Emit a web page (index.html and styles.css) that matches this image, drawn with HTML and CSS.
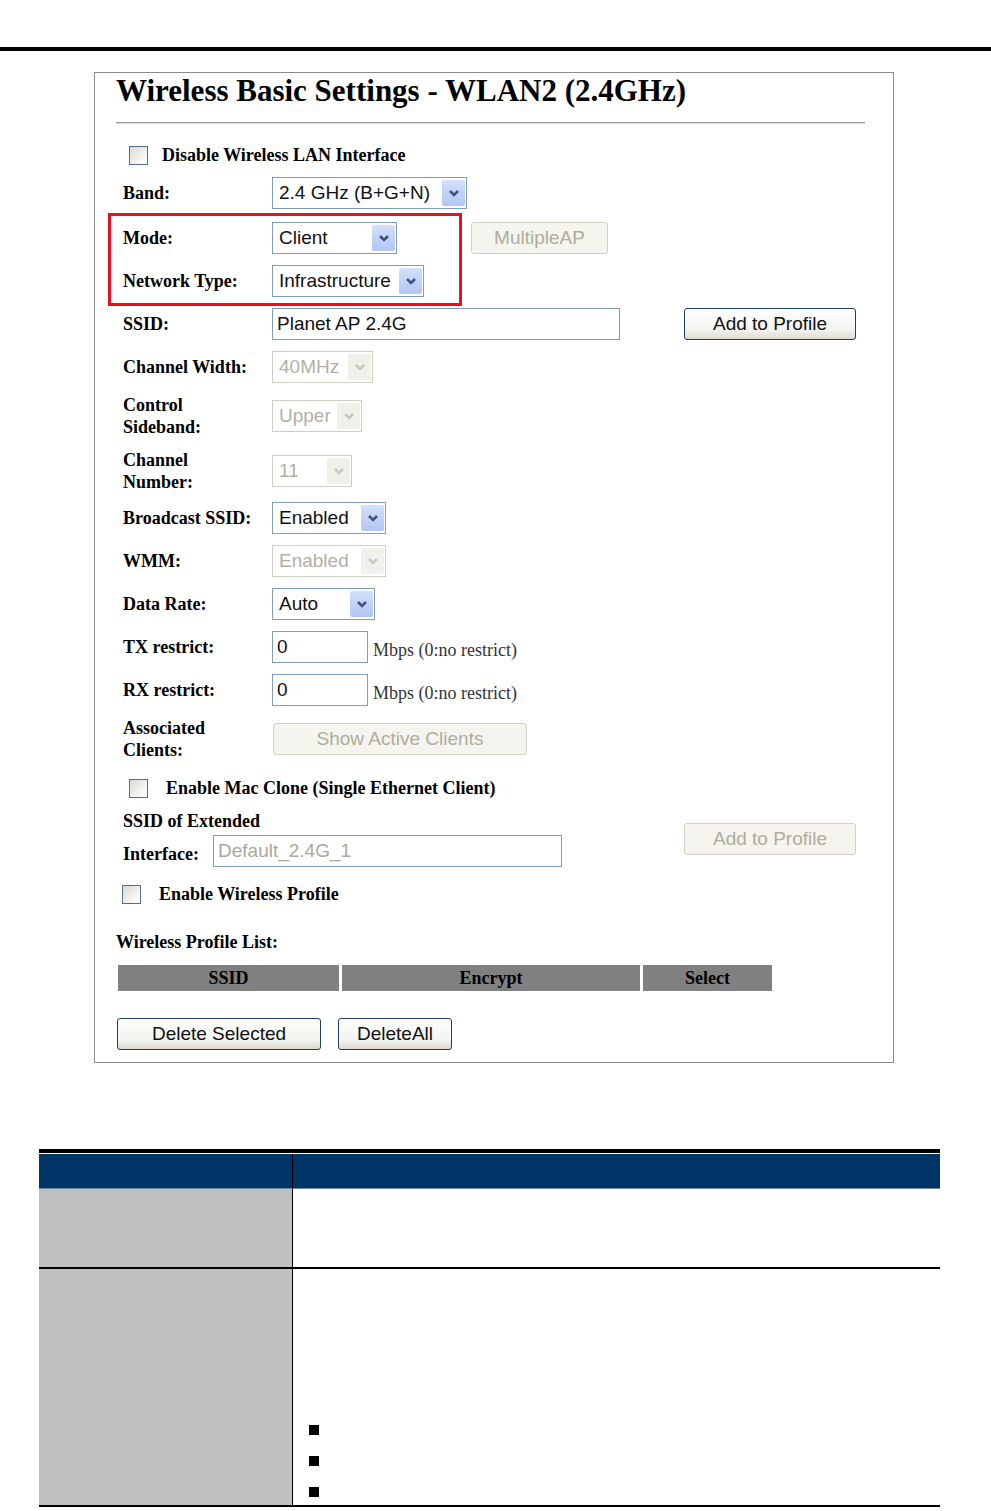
FILE: index.html
```html
<!DOCTYPE html>
<html lang="en">
<head>
  <meta charset="UTF-8">
  <meta name="viewport" content="width=device-width, initial-scale=1.0">
  <title>Wireless Basic Settings - WLAN2 (2.4GHz)</title>
  <link rel="stylesheet" href="styles.css">
</head>
<body>
  <div class="top-rule"></div>

  <div class="panel">
    <h1 class="title">Wireless Basic Settings - WLAN2 (2.4GHz)</h1>
    <hr class="title-rule">

    <div class="form">
      <div class="row check-row first">
        <span class="checkbox"></span>
        <span class="check-label">Disable Wireless LAN Interface</span>
      </div>

      <div class="row">
        <span class="label">Band:</span>
        <div class="select" style="width: 195px">
          <span class="value">2.4 GHz (B+G+N)</span>
          <span class="arrow"><svg viewBox="0 0 12 8"><path d="M2 2 L6 6 L10 2"/></svg></span>
        </div>
      </div>

      <!-- red box marks the two client settings -->
      <div class="highlight">
        <div class="row">
          <span class="label">Mode:</span>
          <div class="select" style="width: 125px">
            <span class="value">Client</span>
            <span class="arrow"><svg viewBox="0 0 12 8"><path d="M2 2 L6 6 L10 2"/></svg></span>
          </div>
          <button class="button disabled multi-ap">MultipleAP</button>
        </div>
        <div class="row">
          <span class="label">Network Type:</span>
          <div class="select" style="width: 152px">
            <span class="value">Infrastructure</span>
            <span class="arrow"><svg viewBox="0 0 12 8"><path d="M2 2 L6 6 L10 2"/></svg></span>
          </div>
        </div>
      </div>

      <div class="row">
        <span class="label">SSID:</span>
        <div class="input ssid">Planet AP 2.4G</div>
        <button class="button add-profile">Add to Profile</button>
      </div>

      <div class="row">
        <span class="label">Channel Width:</span>
        <div class="select disabled" style="width: 101px">
          <span class="value">40MHz</span>
          <span class="arrow"><svg viewBox="0 0 12 8"><path d="M2 2 L6 6 L10 2"/></svg></span>
        </div>
      </div>

      <div class="row">
        <span class="label">Control<br>Sideband:</span>
        <div class="select disabled" style="width: 90px">
          <span class="value">Upper</span>
          <span class="arrow"><svg viewBox="0 0 12 8"><path d="M2 2 L6 6 L10 2"/></svg></span>
        </div>
      </div>

      <div class="row">
        <span class="label">Channel<br>Number:</span>
        <div class="select disabled" style="width: 80px">
          <span class="value">11</span>
          <span class="arrow"><svg viewBox="0 0 12 8"><path d="M2 2 L6 6 L10 2"/></svg></span>
        </div>
      </div>

      <div class="row tight">
        <span class="label">Broadcast SSID:</span>
        <div class="select" style="width: 114px">
          <span class="value">Enabled</span>
          <span class="arrow"><svg viewBox="0 0 12 8"><path d="M2 2 L6 6 L10 2"/></svg></span>
        </div>
      </div>

      <div class="row">
        <span class="label">WMM:</span>
        <div class="select disabled" style="width: 114px">
          <span class="value">Enabled</span>
          <span class="arrow"><svg viewBox="0 0 12 8"><path d="M2 2 L6 6 L10 2"/></svg></span>
        </div>
      </div>

      <div class="row">
        <span class="label">Data Rate:</span>
        <div class="select" style="width: 103px">
          <span class="value">Auto</span>
          <span class="arrow"><svg viewBox="0 0 12 8"><path d="M2 2 L6 6 L10 2"/></svg></span>
        </div>
      </div>

      <div class="row">
        <span class="label">TX restrict:</span>
        <div class="input rate">0</div>
        <span class="unit">Mbps (0:no restrict)</span>
      </div>

      <div class="row">
        <span class="label">RX restrict:</span>
        <div class="input rate">0</div>
        <span class="unit">Mbps (0:no restrict)</span>
      </div>

      <div class="row">
        <span class="label">Associated<br>Clients:</span>
        <button class="button disabled clients">Show Active Clients</button>
      </div>

      <div class="row check-row">
        <span class="checkbox"></span>
        <span class="check-label wide">Enable Mac Clone (Single Ethernet Client)</span>
      </div>

      <div class="row extended">
        <div class="ext-fields">
          <div class="ext-title">SSID of Extended</div>
          <div class="ext-line">
            <span class="ext-label">Interface:</span>
            <div class="input disabled ext-input">Default_2.4G_1</div>
          </div>
        </div>
        <button class="button disabled ext-add">Add to Profile</button>
      </div>

      <div class="row check-row profile">
        <span class="checkbox"></span>
        <span class="check-label wide">Enable Wireless Profile</span>
      </div>
    </div>

    <div class="list-title">Wireless Profile List:</div>
    <table class="profile-table">
      <tr>
        <th class="col-ssid">SSID</th>
        <th class="col-encrypt">Encrypt</th>
        <th class="col-select">Select</th>
      </tr>
    </table>

    <div class="actions">
      <button class="button delete-selected">Delete Selected</button>
      <button class="button delete-all">DeleteAll</button>
    </div>
  </div>

  <div class="desc">
    <div class="desc-head left"></div>
    <div class="desc-head right"></div>
    <div class="desc-name first"></div>
    <div class="desc-text first"></div>
    <div class="desc-name second"></div>
    <div class="desc-text second">
      <ul class="bullets">
        <li></li>
        <li></li>
        <li></li>
      </ul>
    </div>
  </div>
</body>
</html>
```

FILE: styles.css
```css
body {
  margin: 0;
  background: #fff;
  font-family: "Liberation Serif", "Times New Roman", serif;
  color: #000;
}
.top-rule {
  height: 4px;
  margin-top: 47px;
  background: #000;
}

/* settings screenshot */
.panel {
  box-sizing: border-box;
  width: 800px;
  margin: 21px 0 0 94px;
  padding: 0 28px 12px 21px;
  border: 1px solid #8a8a8a;
}
.title {
  margin: 0;
  font-size: 31px;
  line-height: 36px;
  font-weight: bold;
  white-space: nowrap;
}
.title-rule {
  margin: 13px 0 0 0;
  height: 0;
  border: none;
  border-top: 1px solid #9a9a9a;
  border-bottom: 1px solid #dcdcdc;
}
.form {
  display: flex;
  flex-direction: column;
  gap: 11px;
  padding-left: 7px;
  margin-top: 15px;
}
.highlight {
  position: relative;
  display: flex;
  flex-direction: column;
  gap: 11px;
  margin-top: 2px;
}
.highlight::after {
  content: "";
  position: absolute;
  left: -15px;
  top: -9px;
  width: 354px;
  height: 93px;
  box-sizing: border-box;
  border: 3px solid #e8101a;
  pointer-events: none;
}
.row {
  display: flex;
  align-items: center;
  min-height: 32px;
}
.row.tight {
  margin-top: -2px;
}
.label {
  width: 149px;
  flex-shrink: 0;
  font-size: 18px;
  line-height: 22px;
  font-weight: bold;
}
.check-row.first {
  margin-bottom: -5px;
}
.checkbox {
  box-sizing: border-box;
  width: 19px;
  height: 19px;
  margin-left: 6px;
  border: 1px solid #4f6f93;
  background: linear-gradient(135deg, #d9d9d3, #f6f6f4 70%, #fff);
}
.check-label {
  margin-left: 14px;
  font-size: 18px;
  font-weight: bold;
}
.check-label.wide {
  margin-left: 18px;
}
.profile .checkbox {
  margin-left: -1px;
}

/* form controls */
.select,
.input,
.button {
  box-sizing: border-box;
  height: 32px;
  font-family: "Liberation Sans", Arial, sans-serif;
  font-size: 19px;
  color: #111;
}
.select {
  display: flex;
  align-items: center;
  padding-left: 6px;
  border: 1px solid #7f9db9;
  background: #fff;
}
.select .value {
  white-space: nowrap;
}
.select .arrow {
  display: flex;
  align-items: center;
  justify-content: center;
  width: 23px;
  height: 26px;
  margin-left: auto;
  margin-right: 1px;
  border-radius: 2px;
  background: linear-gradient(#d3e0fb, #b2c6f2);
}
.select .arrow svg {
  width: 12px;
  height: 8px;
}
.select .arrow path {
  fill: none;
  stroke: #3e5283;
  stroke-width: 2.6;
}
.select.disabled {
  border-color: #d0cec3;
  color: #b3b0a3;
}
.select.disabled .arrow {
  background: #f1f0ea;
}
.select.disabled .arrow path {
  stroke: #cac8bc;
}
.input {
  display: flex;
  align-items: center;
  padding-left: 4px;
  border: 1px solid #7f9db9;
  background: #fff;
}
.input.disabled {
  color: #aca899;
}
.ssid {
  width: 348px;
}
.rate {
  width: 96px;
}
.unit {
  align-self: flex-end;
  margin: 0 0 2px 5px;
  font-size: 18px;
  line-height: 22px;
  color: #333;
}
.button {
  padding: 0;
  border: 1px solid #1f3f63;
  border-radius: 3px;
  background: linear-gradient(#fefefe, #f3f3ef 70%, #dcd9cf);
  text-align: center;
  cursor: pointer;
}
.button.disabled {
  border-color: #d2d0c6;
  background: #f5f4ee;
  color: #b0ad9f;
}
.multi-ap {
  width: 137px;
  margin-left: 74px;
}
.add-profile {
  width: 172px;
  margin-left: 64px;
}
.clients {
  width: 254px;
  margin-left: 1px;
}
.extended {
  align-items: flex-start;
}
.ext-title {
  margin: -4px 0 4px 0;
  font-size: 18px;
  line-height: 20px;
  font-weight: bold;
}
.ext-line {
  display: flex;
  align-items: center;
}
.ext-label {
  width: 90px;
  margin-top: 6px;
  font-size: 18px;
  font-weight: bold;
}
.ext-input {
  width: 349px;
}
.ext-add {
  width: 172px;
  margin: 8px 0 0 122px;
}

/* profile list */
.list-title {
  margin-top: 21px;
  font-size: 18px;
  line-height: 22px;
  font-weight: bold;
}
.profile-table {
  margin: 12px 0 0 -1px;
  border-spacing: 3px 0;
}
.profile-table th {
  height: 26px;
  padding: 0;
  background: #808080;
  font-size: 18px;
  font-weight: bold;
}
.col-ssid { width: 221px; }
.col-encrypt { width: 298px; }
.col-select { width: 129px; }
.actions {
  display: flex;
  gap: 17px;
  margin: 27px 0 0 1px;
}
.delete-selected {
  width: 204px;
}
.delete-all {
  width: 114px;
}

/* manual table below */
.desc {
  display: grid;
  grid-template-columns: 254px 647px;
  grid-template-rows: 35px 80px 238px;
  width: 901px;
  margin: 86px 0 0 39px;
  padding-top: 1px;
  border-top: 4px solid #000;
}
.desc-head {
  background: #003366;
  border-bottom: 1px solid #6f86a6;
}
.desc-head.left,
.desc-name {
  border-right: 1px solid #000;
}
.desc-name {
  background: #c0c0c0;
}
.desc-name.first,
.desc-text.first,
.desc-name.second,
.desc-text.second {
  border-bottom: 2px solid #000;
}
.bullets {
  list-style: none;
  margin: 0;
  padding: 145px 0 0 16px;
}
.bullets li {
  display: flex;
  align-items: center;
  height: 31px;
}
.bullets li::before {
  content: "";
  width: 10px;
  height: 10px;
  background: #000;
}
```
